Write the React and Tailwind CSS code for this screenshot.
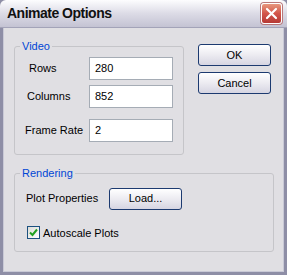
import React from "react";

const font = { fontFamily: '"Liberation Sans", Arial, sans-serif' };

const Field = ({ label, value, className = "", labelClass = "w-[64px]" }) => (
  <div className={`flex items-center ${className}`}>
    <span className={`${labelClass} text-[11px] text-black whitespace-nowrap`}>{label}</span>
    <div className="w-[84px] h-[23px] bg-white border border-[#a5acb5] flex items-center pl-[5px] text-[11px] text-black">
      {value}
    </div>
  </div>
);

const XpButton = ({ children, className = "" }) => (
  <button className={`h-[22px] rounded-[3px] border border-[#1c3a70] bg-gradient-to-b from-[#ffffff] via-[#ecebf1] to-[#d6d5e2] text-[11px] text-black ${className}`}>
    {children}
  </button>
);

export default function App() {
  return (
    <div className="w-[287px] h-[275px] flex flex-col bg-[#8e8ea6]" style={font}>
      {/* Title bar */}
      <div className="h-[28px] flex items-center justify-between pl-[7px] pr-[5px] rounded-t-[6px] bg-gradient-to-b from-[#fdfdfe] via-[#dcdbe6] to-[#c4c3d3] border-b border-[#a3a3b8]">
        <span className="text-[14px] font-bold text-[#111] tracking-[-0.5px]">Animate Options</span>
        <div className="w-[21px] h-[21px] rounded-[3px] border border-[#fff] bg-gradient-to-b from-[#e6977e] via-[#d2554a] to-[#b63a36] flex items-center justify-center shadow-[0_0_0_1px_#b9787a]">
          <svg width="13" height="13" viewBox="0 0 13 13">
            <path d="M2 2 L11 11 M11 2 L2 11" stroke="#fff" strokeWidth="2.2" strokeLinecap="round" />
          </svg>
        </div>
      </div>

      {/* Client area */}
      <div className="flex-1 mx-[3px] mb-[3px] bg-[#e0dfe3] border-l border-r border-b border-[#c9c9d6] pl-[10px] pr-[12px] pt-[10px]">
        <div className="flex items-start">
          <fieldset className="w-[171px] h-[117px] border border-[#c5c5c9] rounded-[3px] pl-[10px]">
            <legend className="text-[11px] text-[#0046d5] px-[2px] ml-[-5px]">Video</legend>
            <Field label="Rows" value="280" className="mt-[2px]" labelClass="w-[60px] ml-[4px]" />
            <Field label="Columns" value="852" className="mt-[5px]" labelClass="w-[62px] ml-[2px]" />
            <Field label="Frame Rate" value="2" className="mt-[11px]" />
          </fieldset>
          <div className="flex flex-col ml-[14px] mt-[6px] gap-[6px]">
            <XpButton className="w-[73px]">OK</XpButton>
            <XpButton className="w-[73px]">Cancel</XpButton>
          </div>
        </div>

        <fieldset className="mt-[10px] w-[260px] h-[87px] border border-[#c5c5c9] rounded-[3px] pl-[11px]">
          <legend className="text-[11px] text-[#0046d5] px-[2px] ml-[-6px]">Rendering</legend>
          <div className="flex items-center mt-[6px]">
            <span className="w-[83px] text-[11px] text-black">Plot Properties</span>
            <XpButton className="w-[73px]">Load...</XpButton>
          </div>
          <div className="flex items-center mt-[15px] ml-[1px] gap-[3px]">
            <div className="w-[13px] h-[13px] border border-[#1c5180] bg-gradient-to-br from-[#dcdcd7] to-[#ffffff] flex items-center justify-center">
              <svg width="9" height="9" viewBox="0 0 9 9">
                <path d="M1 4.5 L3.5 7 L8 1.5" stroke="#21a121" strokeWidth="2" fill="none" />
              </svg>
            </div>
            <span className="text-[11px] text-black">Autoscale Plots</span>
          </div>
        </fieldset>
      </div>
    </div>
  );
}
